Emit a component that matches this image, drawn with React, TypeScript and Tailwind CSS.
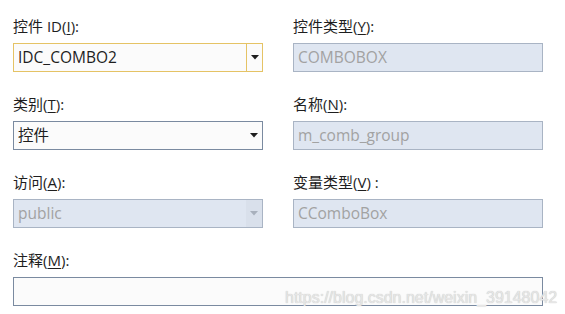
import React from 'react';

const FONT = { fontFamily: '"Segoe UI", "Open Sans", "Noto Sans CJK SC", sans-serif' };

function Label({ text, hot, tail = '):' }: { text: string; hot: string; tail?: string }) {
  return (
    <div className="h-[20px] leading-[20px] text-[15px] text-[#1e1e1e] whitespace-nowrap">
      {text}(<span className="underline underline-offset-2">{hot}</span>{tail}
    </div>
  );
}

function Arrow({ dim }: { dim?: boolean }) {
  return (
    <svg width="8" height="5" viewBox="0 0 8 5" className="shrink-0">
      <path d="M0 0h8L4 4.5z" fill={dim ? '#a8b0bc' : '#1e1e1e'} />
    </svg>
  );
}

function Combo({ value, focus, disabled, split }: { value: string; focus?: boolean; disabled?: boolean; split?: boolean }) {
  const border = focus ? 'border-[#e5c365]' : disabled ? 'border-[#a9b4c4]' : 'border-[#7a8aa0]';
  return (
    <div className={`mt-[7px] h-[29px] w-[250px] flex border ${border} ${disabled ? 'bg-[#dfe6f1]' : 'bg-[#fbfbfb]'}`}>
      <div className={`flex-1 pl-[4px] flex items-center text-[15.5px] ${disabled ? 'text-[#a2a2a2]' : 'text-[#1e1e1e]'}`}>
        {value}
      </div>
      <div
        className={`w-[16px] flex items-center justify-center ${split ? 'border-l border-[#e5c365]' : ''} ${
          disabled ? 'bg-[#d9e0eb]' : ''
        }`}
      >
        <Arrow dim={disabled} />
      </div>
    </div>
  );
}

function Field({ value }: { value: string }) {
  return (
    <div className="mt-[7px] h-[29px] w-[250px] flex items-center pl-[4px] border border-[#a9b4c4] bg-[#dfe6f1] text-[15.5px] text-[#a2a2a2]">
      {value}
    </div>
  );
}

export default function App() {
  return (
    <div className="relative w-[565px] h-[314px] bg-white overflow-hidden" style={FONT}>
      <div className="pl-[13px] pt-[16px] grid grid-cols-[250px_250px] gap-x-[30px] gap-y-[22px]">
        <div>
          <Label text="控件 ID" hot="I" />
          <Combo value="IDC_COMBO2" focus split />
        </div>
        <div>
          <Label text="控件类型" hot="Y" />
          <Field value="COMBOBOX" />
        </div>

        <div>
          <Label text="类别" hot="T" />
          <Combo value="控件" />
        </div>
        <div>
          <Label text="名称" hot="N" />
          <Field value="m_comb_group" />
        </div>

        <div>
          <Label text="访问" hot="A" />
          <Combo value="public" disabled />
        </div>
        <div>
          <Label text="变量类型" hot="V" tail=") :" />
          <Field value="CComboBox" />
        </div>

        <div className="col-span-2">
          <Label text="注释" hot="M" />
          <div className="mt-[7px] h-[29px] w-[530px] border border-[#7a8aa0] bg-[#fbfbfb]" />
        </div>
      </div>

      {/* csdn watermark */}
      <div
        className="absolute left-[285px] top-[286px] text-[16px] text-[#e6e6e6] whitespace-nowrap"
        style={{ fontFamily: '"Liberation Sans", Arial, sans-serif', textShadow: '0 0 1px #b8b8b8' }}
      >
        https://blog.csdn.net/weixin_39148042
      </div>
    </div>
  );
}
